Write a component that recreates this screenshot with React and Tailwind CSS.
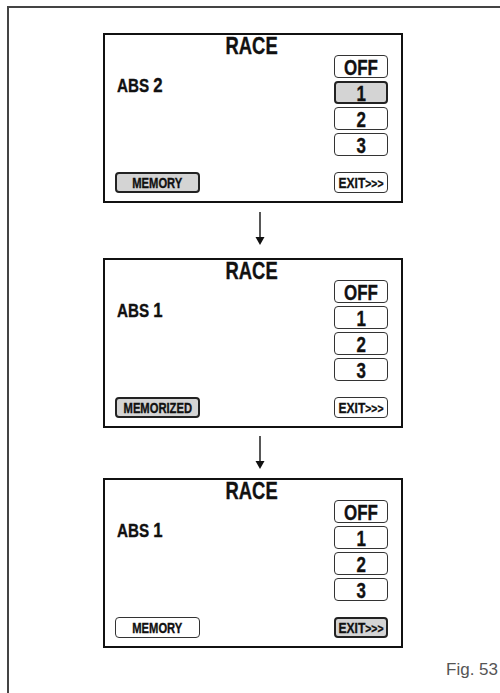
import React from "react";

const sans = { fontFamily: '"Liberation Sans", Arial, sans-serif' };

function N({ children, className = "", origin = "origin-center", scale = "scale-x-[0.8]" }) {
  return (
    <span
      className={
        "inline-block whitespace-nowrap [-webkit-text-stroke:0.35px_#111] " + scale + " " + origin + " " + className
      }
    >
      {children}
    </span>
  );
}

function OptBox({ label, active }) {
  return (
    <div
      className={
        "w-[54px] h-[23px] rounded-[4px] flex items-center justify-center font-bold text-[22px] leading-none text-[#111] " +
        (active ? "border-2 border-[#222] bg-[#d4d4d4]" : "border border-[#333] bg-white")
      }
    >
      <N className="pt-[2px]" scale="scale-x-[0.77]">{label}</N>
    </div>
  );
}

function Arrow({ h, top }) {
  return (
    <div className={"w-[300px] flex justify-center " + h}>
      <svg width="12" height="34" viewBox="0 0 12 34" className={top + " ml-[14px]"}>
        <line x1="6" y1="0" x2="6" y2="27" stroke="#111" strokeWidth="1.4" />
        <polygon points="1.5,25 10.5,25 6,33" fill="#111" />
      </svg>
    </div>
  );
}

function Screen({ abs, selected, bottomLeft, leftActive, exitActive }) {
  return (
    <div className="w-[300px] h-[170px] border-2 border-[#111] flex flex-col pl-[10px] pr-[13px]" style={sans}>
      <div className="h-[20px] flex justify-center items-start">
        <N className="font-bold text-[23px] leading-[22px] text-[#111]">RACE</N>
      </div>
      <div className="flex justify-between">
        <div className="pt-[19px] pl-[2px] font-bold text-[#111] leading-none">
          <N origin="origin-left">
            <span className="text-[19px]">ABS </span>
            <span className="text-[21px]">{abs}</span>
          </N>
        </div>
        <div className="flex flex-col gap-[3px]">
          <OptBox label="OFF" active={selected === "OFF"} />
          <OptBox label="1" active={selected === "1"} />
          <OptBox label="2" active={selected === "2"} />
          <OptBox label="3" active={selected === "3"} />
        </div>
      </div>
      <div className="mt-auto mb-[8px] flex justify-between items-end">
        <div
          className={
            "w-[85px] h-[21px] rounded-[4px] flex items-center justify-center font-bold text-[14px] leading-none text-[#111] " +
            (leftActive ? "border-2 border-[#222] bg-[#d4d4d4]" : "border border-[#333] bg-white")
          }
        >
          <N>{bottomLeft}</N>
        </div>
        <div
          className={
            "w-[54px] h-[21px] rounded-[4px] flex items-center justify-center font-bold leading-none text-[#111] " +
            (exitActive ? "border-2 border-[#222] bg-[#d4d4d4]" : "border border-[#333] bg-white")
          }
        >
          <N>
            <span className="text-[15px]">EXIT</span>
            <span className="text-[13px]">&gt;&gt;&gt;</span>
          </N>
        </div>
      </div>
    </div>
  );
}

export default function App() {
  return (
    <div className="w-[500px] h-[693px] bg-white pt-[6px] pl-[7px] overflow-hidden">
      <div className="h-full border-t-2 border-l-2 border-[#444] pt-[25px] pl-[94px] flex flex-col">
        <Screen abs="2" selected="1" bottomLeft="MEMORY" leftActive />
        <Arrow h="h-[55px]" top="mt-[9px]" />
        <Screen abs="1" selected="" bottomLeft="MEMORIZED" leftActive />
        <Arrow h="h-[50px]" top="mt-[8px]" />
        <Screen abs="1" selected="" bottomLeft="MEMORY" exitActive />
        <div className="flex justify-end pr-[2px] mt-[13px]">
          <span className="text-[17px] leading-none text-[#555]" style={sans}>
            Fig. 53
          </span>
        </div>
      </div>
    </div>
  );
}
